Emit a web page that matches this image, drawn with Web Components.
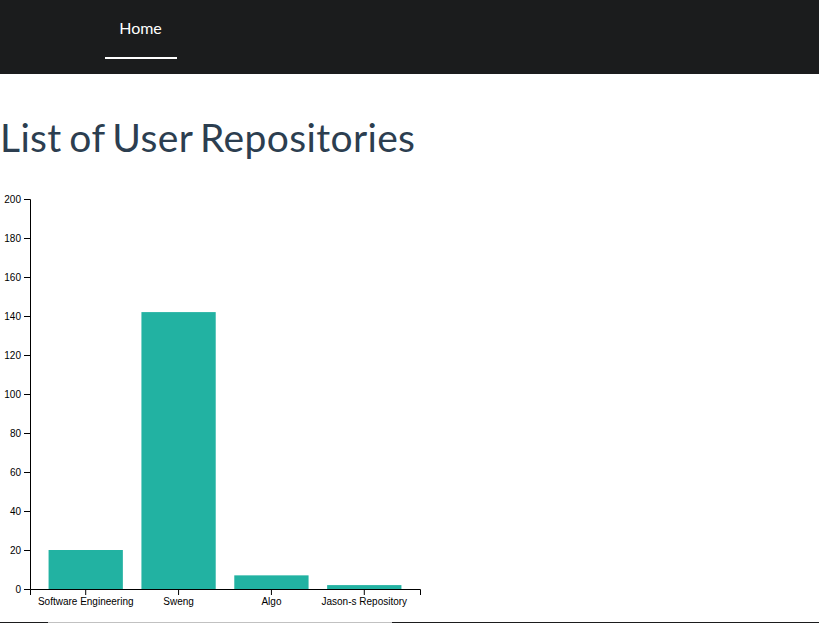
<!DOCTYPE html>
<html lang="en">
<head>
<meta charset="utf-8">
<title>Repositories</title>
<style>
html, body { margin: 0; height: 100%; overflow: hidden; background: #fff; }
body { font-family: Lato, sans-serif; color: #2c3e50; }
</style>
</head>
<body>
<repo-page>
  <nav-bar slot="nav"><nav-item>Home</nav-item></nav-bar>
  <page-title>List of User Repositories</page-title>
  <bar-chart></bar-chart>
  <bottom-rule slot="footer"></bottom-rule>
</repo-page>
<script>
function define(name, html) {
  customElements.define(name, class extends HTMLElement {
    constructor() {
      super();
      this.attachShadow({ mode: 'open' }).innerHTML = html;
    }
  });
}

define('repo-page', `<style>
  :host { display: flex; flex-direction: column; height: 623px; }
  main { flex: 1; display: flex; flex-direction: column; min-height: 0; }
</style><slot name="nav"></slot><main><slot></slot></main><slot name="footer"></slot>`);

define('nav-bar', `<style>
  :host { display: flex; align-items: flex-start; box-sizing: border-box; height: 74px; padding-left: 105px; background: #1b1c1d; }
</style><slot></slot>`);

define('nav-item', `<style>
  :host { display: block; box-sizing: border-box; width: 72px; height: 59px; padding: 16px 1px 0 0; border-bottom: 2px solid #fff; color: #fff; font-size: 16px; line-height: 24px; text-align: center; }
</style><slot></slot>`);

define('page-title', `<style>
  :host { display: block; padding-top: 42px; height: 73px; }
  h1 { margin: 0; font-size: 39px; line-height: 43px; font-weight: 400; white-space: nowrap; letter-spacing: .36px; word-spacing: -2.7px; }
</style><h1><slot></slot></h1>`);

define('bottom-rule', `<style>
  :host { display: flex; height: 1px; background: #1b1c1d; padding-left: 48px; }
  span { width: 344px; background: #c1c1c1; }
</style><span></span>`);

customElements.define('bar-chart', class extends HTMLElement {
  constructor() {
    super();
    const data = [['Software Engineering', 20], ['Sweng', 142], ['Algo', 7], ['Jason-s Repository', 2]];
    const size = 390, max = 200, pad = 0.2;
    const step = size / (data.length + pad), band = step * (1 - pad);
    let bars = '', xs = '', ys = '';
    data.forEach(([label, value], i) => {
      const x = step * (i + pad), h = value / max * size;
      bars += `<rect x="${x}" y="${size - h}" width="${band}" height="${h}"/>`;
      xs += `<g transform="translate(${x + band / 2},0)"><line y2="6"/><text y="9" dy=".71em">${label}</text></g>`;
    });
    for (let v = 0; v <= max; v += 20) {
      ys += `<g transform="translate(0,${size - v / max * size + 0.5})"><line x2="-6"/><text x="-9" dy=".32em">${v}</text></g>`;
    }
    this.attachShadow({ mode: 'open' }).innerHTML = `<style>
      :host { display: block; }
      svg { display: block; font: 10px "Liberation Sans", Arial, sans-serif; }
      rect { fill: #22b2a2; }
      line, path { stroke: #000; fill: none; }
      text { fill: #000; }
      .x { text-anchor: middle; }
      .y { text-anchor: end; }
    </style><svg width="450" height="433"><g transform="translate(30,10)">
      ${bars}
      <g class="x" transform="translate(0,390)"><path d="M.5,6V.5H390.5V6"/>${xs}</g>
      <g class="y"><path d="M-6,.5H.5V390.5H-6"/>${ys}</g>
    </g></svg>`;
  }
});
</script>
</body>
</html>
